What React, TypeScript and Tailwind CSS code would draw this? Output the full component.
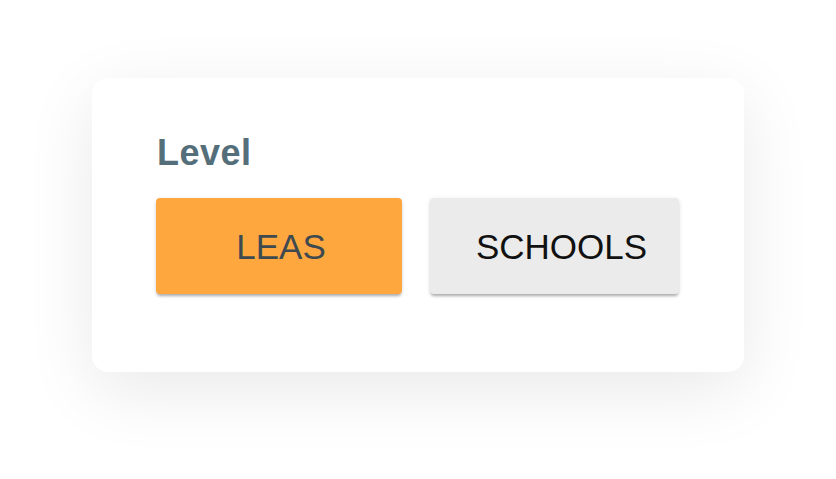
import * as React from 'react';

const levels = ['LEAS', 'SCHOOLS'] as const;

export default function App() {
  const [level, setLevel] = React.useState<(typeof levels)[number]>('LEAS');

  return (
    <div className="w-[836px] h-[479px] bg-white flex items-start justify-center pt-[78px] font-['Liberation_Sans',Arial,sans-serif]">
      <div className="w-[652px] h-[294px] bg-white rounded-2xl shadow-[0_18px_70px_rgba(0,0,0,0.09)] pt-[55px] px-[65px]">
        <div className="text-[36px] leading-[40px] font-bold tracking-[0.5px] text-[#546e7a]">Level</div>
        <div className="flex gap-[28px] mt-[25px] -ml-[1px]">
          {levels.map((l) => (
            <button
              key={l}
              onClick={() => setLevel(l)}
              className={
                'h-[96px] rounded-[4px] text-[35px] leading-none flex items-center justify-center shadow-[0_3px_3px_-1px_rgba(0,0,0,0.28),0_1px_5px_rgba(0,0,0,0.1)] ' +
                (level === l
                  ? 'w-[246px] pl-[4px] bg-[#ffa73f] text-[#3f4a50]'
                  : 'w-[249px] pl-[14px] bg-[#ebebeb] text-[#111111]')
              }
            >
              {l}
            </button>
          ))}
        </div>
      </div>
    </div>
  );
}
